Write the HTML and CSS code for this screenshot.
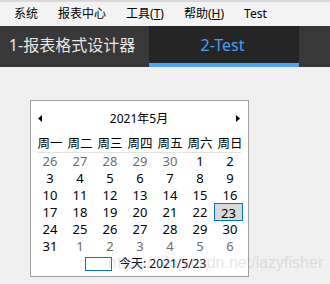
FILE: index.html
```html
<!DOCTYPE html>
<html lang="zh-CN">
<head>
    <meta charset="UTF-8">
    <meta name="viewport" content="width=device-width, initial-scale=1.0">
    <title>报表</title>
    <link rel="stylesheet" href="styles.css">
</head>
<body>
    <div class="topline"></div>
    <div class="menubar">
        <span class="menu">系统</span>
        <span class="menu">报表中心</span>
        <span class="menu">工具(<u>T</u>)</span>
        <span class="menu">帮助(<u>H</u>)</span>
        <span class="menu">Test</span>
    </div>
    <div class="tabs">
        <div class="tab first">1-报表格式设计器</div>
        <div class="tab active">2-Test</div>
    </div>

    <div class="calendar">
        <div class="cal-head">
            <svg width="4" height="7" viewBox="0 0 4 7"><polygon points="4,0 0,3.5 4,7" fill="#000"/></svg>
            <span class="cal-title">2021年5月</span>
            <svg width="4" height="7" viewBox="0 0 4 7"><polygon points="0,0 4,3.5 0,7" fill="#000"/></svg>
        </div>
        <div class="weekdays">
            <span>周一</span><span>周二</span><span>周三</span><span>周四</span><span>周五</span><span>周六</span><span>周日</span>
        </div>
        <div class="sep"></div>
        <div class="days">
            <span class="other">26</span><span class="other">27</span><span class="other">28</span><span class="other">29</span><span class="other">30</span><span>1</span><span>2</span>
            <span>3</span><span>4</span><span>5</span><span>6</span><span>7</span><span>8</span><span>9</span>
            <span>10</span><span>11</span><span>12</span><span>13</span><span>14</span><span>15</span><span>16</span>
            <span>17</span><span>18</span><span>19</span><span>20</span><span>21</span><span>22</span><span class="sel">23</span>
            <span>24</span><span>25</span><span>26</span><span>27</span><span>28</span><span>29</span><span>30</span>
            <span>31</span><span class="other">1</span><span class="other">2</span><span class="other">3</span><span class="other">4</span><span class="other">5</span><span class="other">6</span>
        </div>
        <div class="today">
            <span class="today-box"></span>
            <span>今天: 2021/5/23</span>
        </div>
    </div>

    <div class="watermark">https://blog.csdn.net/lazyfisher</div>
</body>
</html>
```

FILE: styles.css
```css
body { margin: 0; background: #f0f0f0; font-family: "Noto Sans", "Noto Sans CJK SC", sans-serif; color: #000; }
.topline { height: 2px; background: #d9d9d9; }
.menubar { height: 24px; background: #f3f3f3; display: flex; padding-left: 4px; font-size: 12px; line-height: 24px; }
.menu { padding: 0 10px; }
.menu u { text-underline-offset: 1px; }
.tabs { height: 41px; background: #383838; display: flex; }
.tab { width: 150px; height: 41px; box-sizing: border-box; padding-top: 8px; line-height: 22px; font-size: 16px; color: #e6e6e6; text-align: center; }
.tab.first { width: 149px; padding-right: 5px; }
.tab.active { background: #252525; color: #4a9ff0; border-bottom: 4px solid #4da3ff; padding-right: 3px; }

.calendar { margin: 33px 0 0 30px; width: 217px; background: #fff; border: 1px solid #a0a0a0; }
.cal-head { height: 34px; display: flex; align-items: center; justify-content: space-between; padding: 0 8px 0 7px; }
.cal-title { font-size: 12px; }
.weekdays { display: grid; grid-template-columns: repeat(7, 30px); padding-left: 4px; height: 17px; line-height: 17px; font-size: 12.5px; text-align: center; }
.sep { height: 1px; background: #e3e3e3; margin: 0 7px 0 6px; }
.days { display: grid; grid-template-columns: repeat(7, 30px); grid-auto-rows: 17px; padding-left: 4px; font-size: 13px; line-height: 17px; text-align: center; }
.days .other { color: #6d6d6d; }
.days .sel { margin: -1px 2px 0 -1px; height: 18px; line-height: 18px; box-sizing: border-box; background: #d9d9d9; border: 1px solid #0078d7; }
.today { height: 16px; display: flex; align-items: center; gap: 7px; padding: 0 0 5px 54px; font-size: 12px; }
.today-box { width: 27px; height: 14px; box-sizing: border-box; border: 1px solid #0078d7; margin-top: 2px; }

.watermark { position: absolute; left: 108px; top: 254px; font-family: "Liberation Sans", sans-serif; font-size: 16px; color: rgba(170, 170, 170, 0.3); }
```
